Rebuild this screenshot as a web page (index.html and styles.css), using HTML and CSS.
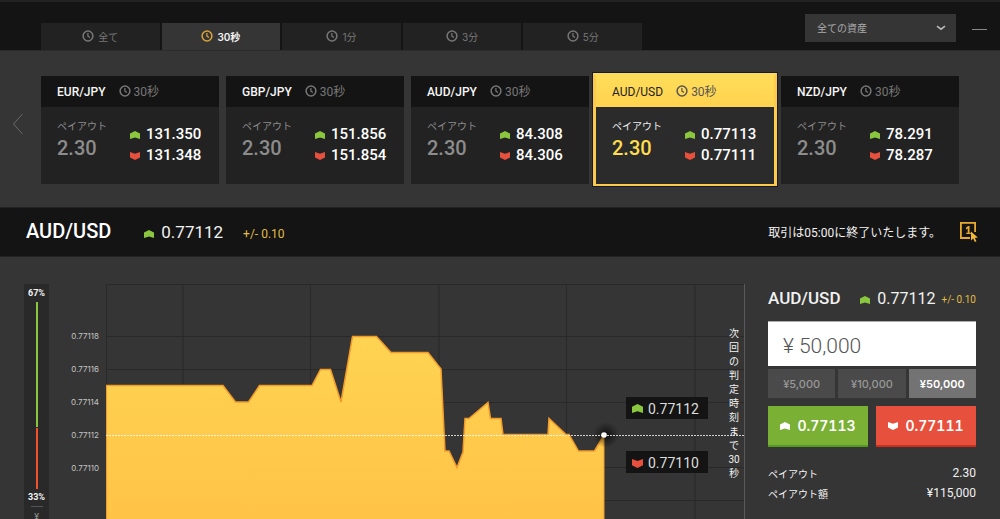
FILE: index.html
```html
<!DOCTYPE html>
<html lang="ja">
<head>
<meta charset="utf-8">
<meta name="viewport" content="width=device-width, initial-scale=1">
<title>AUD/USD</title>
<link rel="stylesheet" href="styles.css">
</head>
<body>
<svg class="defs" aria-hidden="true">
  <symbol id="clock" viewBox="0 0 12 12"><circle cx="6" cy="6" r="4.9" fill="none" stroke="currentColor" stroke-width="1.5"/><path d="M5.900 3v3.100l2 1.500" fill="none" stroke="currentColor" stroke-width="1.200"/></symbol>
  <symbol id="up" viewBox="0 0 10 8"><path d="M0 2.400 5 0l5 2.400V8L5 6.500 0 8z" fill="currentColor"/></symbol>
  <symbol id="down" viewBox="0 0 10 8"><path d="M0 0l5 1.800 5-1.800v5.600L5 8 0 5.600z" fill="currentColor"/></symbol>
</svg>

<header class="topbar">
  <nav class="tabs">
    <button class="tab"><svg class="clock"><use href="#clock"/></svg><span>全て</span></button>
    <button class="tab tab-active"><svg class="clock"><use href="#clock"/></svg><span>30秒</span></button>
    <button class="tab"><svg class="clock"><use href="#clock"/></svg><span>1分</span></button>
    <button class="tab"><svg class="clock"><use href="#clock"/></svg><span>3分</span></button>
    <button class="tab"><svg class="clock"><use href="#clock"/></svg><span>5分</span></button>
  </nav>
  <div class="tools">
    <div class="filter">
      <select class="filter-select" aria-label="資産"><option>全ての資産</option></select>
      <svg class="filter-arrow" viewBox="0 0 10 6"><path d="M1 1.200 5 4.200l4-3" fill="none" stroke="#bbb" stroke-width="1.500"/></svg>
    </div>
    <button class="minimize" aria-label="最小化"></button>
  </div>
</header>

<section class="assets">
  <button class="prev" aria-label="前へ"><svg viewBox="0 0 12 22"><path d="M10.500 1 1.500 11l9 10" fill="none" stroke="#6a6a6a" stroke-width="1"/></svg></button>
  <div class="cards">
    <article class="card">
      <div class="card-head"><h2 class="pair">EUR/JPY</h2><svg class="clock"><use href="#clock"/></svg><span class="term">30秒</span></div>
      <div class="card-body">
        <div class="payout"><span class="payout-label">ペイアウト</span><span class="payout-value">2.30</span></div>
        <div class="quotes"><span class="quote"><svg class="mark green"><use href="#up"/></svg>131.350</span><span class="quote"><svg class="mark red"><use href="#down"/></svg>131.348</span></div>
      </div>
    </article>
    <article class="card">
      <div class="card-head"><h2 class="pair">GBP/JPY</h2><svg class="clock"><use href="#clock"/></svg><span class="term">30秒</span></div>
      <div class="card-body">
        <div class="payout"><span class="payout-label">ペイアウト</span><span class="payout-value">2.30</span></div>
        <div class="quotes"><span class="quote"><svg class="mark green"><use href="#up"/></svg>151.856</span><span class="quote"><svg class="mark red"><use href="#down"/></svg>151.854</span></div>
      </div>
    </article>
    <article class="card">
      <div class="card-head"><h2 class="pair">AUD/JPY</h2><svg class="clock"><use href="#clock"/></svg><span class="term">30秒</span></div>
      <div class="card-body">
        <div class="payout"><span class="payout-label">ペイアウト</span><span class="payout-value">2.30</span></div>
        <div class="quotes"><span class="quote"><svg class="mark green"><use href="#up"/></svg>84.308</span><span class="quote"><svg class="mark red"><use href="#down"/></svg>84.306</span></div>
      </div>
    </article>
    <article class="card card-selected">
      <div class="card-head"><h2 class="pair">AUD/USD</h2><svg class="clock"><use href="#clock"/></svg><span class="term">30秒</span></div>
      <div class="card-body">
        <div class="payout"><span class="payout-label">ペイアウト</span><span class="payout-value">2.30</span></div>
        <div class="quotes"><span class="quote"><svg class="mark green"><use href="#up"/></svg>0.77113</span><span class="quote"><svg class="mark red"><use href="#down"/></svg>0.77111</span></div>
      </div>
    </article>
    <article class="card">
      <div class="card-head"><h2 class="pair">NZD/JPY</h2><svg class="clock"><use href="#clock"/></svg><span class="term">30秒</span></div>
      <div class="card-body">
        <div class="payout"><span class="payout-label">ペイアウト</span><span class="payout-value">2.30</span></div>
        <div class="quotes"><span class="quote"><svg class="mark green"><use href="#up"/></svg>78.291</span><span class="quote"><svg class="mark red"><use href="#down"/></svg>78.287</span></div>
      </div>
    </article>
  </div>
</section>

<section class="titlebar">
  <h1 class="title">AUD/USD</h1>
  <svg class="mark green"><use href="#up"/></svg>
  <span class="title-price">0.77112</span>
  <span class="title-spread">+/- 0.10</span>
  <span class="notice">取引は05:00に終了いたします。</span>
  <button class="oneclick" aria-label="ワンクリック"><svg viewBox="0 0 20 22"><path d="M11 17H1.900V1.900H16.100V11" fill="none" stroke="#e8a92f" stroke-width="1.800"/><path d="M7 6.700 9 5h1.500v8H8.700V7.400L7 8.400zM7.200 11.800h4.600V13H7.200z" fill="#e8a92f"/><path d="M12 10.500v9l2.200-1.900 1.700 3.500 1.600-.8-1.700-3.400 3-.300z" fill="#f2b738"/></svg></button>
</section>

<main class="main">
  <aside class="sentiment">
    <span>67%</span>
    <i class="bar bar-up"></i>
    <i class="bar bar-down"></i>
    <span>33%</span>
    <i class="rule"></i>
    <button class="collapse">¥</button>
  </aside>

  <div class="chart">
    <svg class="plot" viewBox="60 284 685 235" preserveAspectRatio="xMinYMin slice" role="img" aria-label="AUD/USD">
      <defs>
        <linearGradient id="area" x1="0" y1="0" x2="0" y2="1"><stop offset="0" stop-color="#ffd452"/><stop offset="1" stop-color="#ffc347"/></linearGradient>
        <radialGradient id="glow"><stop offset="0" stop-color="#000" stop-opacity=".7"/><stop offset="1" stop-color="#000" stop-opacity="0"/></radialGradient>
      </defs>
      <path class="grid" d="M106 284.500H744M106 336.500H744M106 369.500H744M106 402.500H744M106 435.500H744M106 467.500H744M106 500.500H744M106.500 284V519M183 284V519M310.500 284V519M439 284V519M566.500 284V519M695 284V519"/>
      <path class="edge" d="M744.500 284V519"/>
      <path fill="url(#area)" d="M106 519V385.500H223L235.500 402H248.500L259.500 385.500H312L320.500 369.500H330.500L341 402L352.500 336.500H376.500L391 352.500H428L441 369L445 451H449L457 467.500L463 452L465 418.500H469L488 402.500L490.500 418.500H501L503 434.500H548L549 418.500L566 434.500H569L578.500 451H594.500L604 435V519z"/>
      <path class="line" d="M106 385.500H223L235.500 402H248.500L259.500 385.500H312L320.500 369.500H330.500L341 402L352.500 336.500H376.500L391 352.500H428L441 369L445 451H449L457 467.500L463 452L465 418.500H469L488 402.500L490.500 418.500H501L503 434.500H548L549 418.500L566 434.500H569L578.500 451H594.500L604 435"/>
      <path class="line side" d="M106.500 386V519M604 436V519"/>
      <circle cx="606" cy="435" r="13" fill="url(#glow)"/>
      <path class="current" d="M106 435.500H744"/>
      <circle cx="604" cy="435" r="2.800" fill="#fff"/>
      <g class="axis">
        <text x="99" y="339">0.77118</text>
        <text x="99" y="372">0.77116</text>
        <text x="99" y="405">0.77114</text>
        <text x="99" y="438">0.77112</text>
        <text x="99" y="471">0.77110</text>
      </g>
      <g class="tag">
        <rect x="626" y="397" width="82" height="22"/>
        <use class="green" href="#up" x="632" y="404" width="11" height="9"/>
        <text x="648" y="414">0.77112</text>
        <rect x="626" y="451" width="82" height="22"/>
        <use class="red" href="#down" x="632" y="459" width="11" height="9"/>
        <text x="648" y="468">0.77110</text>
      </g>
    </svg>
    <p class="countdown">次回の判定時刻まで30秒</p>
  </div>

  <form class="order">
    <div class="order-head">
      <h2 class="order-pair">AUD/USD</h2>
      <svg class="mark green"><use href="#up"/></svg>
      <span class="order-price">0.77112</span>
      <span class="order-spread">+/- 0.10</span>
    </div>
    <input class="amount" type="text" value="¥ 50,000" aria-label="金額">
    <div class="presets">
      <button type="button" class="preset">¥5,000</button>
      <button type="button" class="preset">¥10,000</button>
      <button type="button" class="preset preset-active">¥50,000</button>
    </div>
    <div class="actions">
      <button type="button" class="action action-up"><svg class="mark"><use href="#up"/></svg>0.77113</button>
      <button type="button" class="action action-down"><svg class="mark"><use href="#down"/></svg>0.77111</button>
    </div>
    <dl class="summary">
      <div class="row"><dt>ペイアウト</dt><dd>2.30</dd></div>
      <div class="row"><dt>ペイアウト額</dt><dd>¥115,000</dd></div>
    </dl>
  </form>
</main>
</body>
</html>
```
FILE: styles.css
```css
* { box-sizing: border-box; }
body {
  margin: 0;
  height: 100vh;
  display: flex;
  flex-direction: column;
  overflow: hidden;
  background: #353535;
  color: #f2f2f2;
  font-family: Roboto, "Noto Sans CJK JP", sans-serif;
  font-size: 12px;
}
h1, h2, p, dl, dd { margin: 0; }
button, select, input { font-family: inherit; border: 0; border-radius: 0; padding: 0; margin: 0; }
button { background: none; color: inherit; }
svg { display: block; flex: none; }
.defs { position: absolute; width: 0; height: 0; }
.clock { width: 12px; height: 12px; }
.mark { width: 10px; height: 8px; }
.green { color: #8bc63f; }
.red { color: #e8503e; }

.topbar {
  display: flex;
  justify-content: space-between;
  align-items: flex-end;
  height: 51px;
  padding: 0 13px 0 41px;
  background: #141414;
  border-top: 2px solid #222;
  border-bottom: 1px solid #2c2c2c;
}
.tabs { display: grid; grid-template-columns: repeat(5, 1fr); gap: 2px; width: 601px; }
.tab {
  display: flex;
  align-items: center;
  justify-content: center;
  gap: 4px;
  height: 27px;
  background: #222;
  color: #777;
  font-family: Inter, "Noto Sans CJK JP", sans-serif;
  font-size: 10px;
  line-height: 14px;
}
.tab .clock { margin-bottom: 2px; }
.tab-active { background: #353535; color: #f4f4f4; font-weight: 600; margin-bottom: -1px; }
.tab-active .clock { color: #d9a53a; }
.tools { display: flex; align-items: center; gap: 16px; align-self: flex-start; padding-top: 12px; }
.filter { position: relative; }
.filter-select {
  appearance: none;
  display: block;
  width: 151px;
  height: 28px;
  padding: 0 12px;
  background: #353535;
  color: #aaa;
  font-size: 10px;
}
.filter-arrow { position: absolute; right: 10px; top: 11px; width: 10px; height: 6px; }
.minimize { width: 15px; height: 1px; margin-top: 2px; background: #888; }

.assets { display: flex; padding: 25px 41px 23px 0; }
.prev { flex: none; width: 41px; padding: 10px 0 23px 12px; }
.prev svg { width: 12px; height: 22px; }
.cards { flex: 1; display: grid; grid-template-columns: repeat(5, 1fr); gap: 7px; }
.card { background: #222; }
.card-head {
  display: flex;
  align-items: center;
  height: 31px;
  padding: 0 16px;
  background: #141414;
  color: #777;
}
.pair { margin-right: 13px; color: #f6f6f6; font-size: 12px; font-weight: 500; }
.card-head .clock { margin-bottom: 2px; }
.term { margin: 0 0 2px 3px; }
.card-body { display: flex; height: 77px; padding: 12px 0 0 16px; }
.payout { display: flex; flex-direction: column; width: 73px; color: #8c8c8c; }
.payout-label { font-size: 10px; line-height: 16px; }
.payout-value { font-size: 20px; line-height: 26px; font-weight: 500; }
.quotes { display: flex; flex-direction: column; padding-top: 5px; }
.quote { display: flex; align-items: center; gap: 6px; font-size: 15px; line-height: 21px; font-weight: 500; color: #fff; }
.quote .mark { margin-top: 1px; }
.card-selected {
  margin: -3px -3px -2px;
  background: #2b2b2b;
  border: 3px solid #ffc94a;
  border-top-color: #ffdc58;
  border-bottom-width: 2px;
  box-shadow: 0 0 0 1px #141a2c;
}
.card-selected .card-head { background: linear-gradient(#ffdd59, #ffd24f); color: #555; }
.card-selected .pair { color: #222; font-weight: 400; }
.card-selected .payout-label { color: #eee; }
.card-selected .payout-value { color: #ffdb4f; }

.titlebar {
  display: flex;
  align-items: center;
  height: 50px;
  padding: 0 21px 2px 26px;
  background: #141414;
  border-top: 1px solid #222;
  border-bottom: 1px solid #222;
}
.title { margin-right: 33px; font-size: 20px; font-weight: 500; color: #fff; }
.titlebar .mark { margin: 6px 7px 0 0; }
.title-price { margin-top: 2px; font-size: 17px; }
.title-spread { margin: 6px 0 0 20px; font-size: 12px; color: #e0bc45; }
.notice { margin-left: auto; font-size: 12px; }
.oneclick { margin: 2px 0 0 18px; }
.oneclick svg { width: 20px; height: 22px; }

.main { flex: 1; display: flex; min-height: 0; padding: 27px 24px 0; }
.sentiment {
  display: flex;
  flex-direction: column;
  align-items: center;
  width: 25px;
  overflow: hidden;
  background: #292929;
  font-size: 9px;
  line-height: 18px;
  font-weight: 700;
}
.bar { flex: none; width: 2px; }
.bar-up { height: 125px; margin-top: 1px; background: #8bc63f; }
.bar-down { height: 61px; margin-top: 1px; background: #f0522f; }
.rule { flex: none; width: 12px; height: 1px; margin: 1px 0 4px; background: #555; }
.sentiment span { flex: none; height: 17px; }
.sentiment .bar-down + span { height: 16px; line-height: 16px; }
.collapse { flex: none; color: #999; font-size: 9px; line-height: 12px; }

.chart { position: relative; flex: 1; min-width: 0; margin: 0 24px 0 11px; }
.plot { width: 100%; height: 100%; overflow: visible; }
.grid { stroke: #292929; fill: none; }
.edge { stroke: #5a5a5a; }
.line { fill: none; stroke: #f39a2b; stroke-width: 1.5; }
.side { stroke-width: 1; }
.current { stroke: #fff; stroke-dasharray: 2 1; stroke-opacity: .8; }
.axis { fill: #c4c4c4; font-family: Inter, sans-serif; font-size: 8px; text-anchor: end; }
.tag rect { fill: #141414; }
.tag text { fill: #ddd; font-size: 14px; }
.countdown {
  position: absolute;
  top: 43px;
  right: 3px;
  width: 14px;
  font-size: 10px;
  line-height: 14px;
  text-align: center;
}

.order { width: 208px; flex: none; }
.order-head { display: flex; align-items: center; height: 27px; margin-bottom: 10px; white-space: nowrap; }
.order-pair { font-size: 17px; font-weight: 500; }
.order-head .mark { margin: 4px 7px 0 auto; }
.order-price { margin-top: 1px; font-size: 16px; }
.order-spread { margin: 4px 0 0 6px; font-size: 10px; color: #e0bc45; }
.amount {
  display: block;
  width: 100%;
  height: 45px;
  padding: 4px 15px 0;
  background: #fff;
  color: #555;
  font-size: 21px;
  font-weight: 300;
  border-top: 1px solid #aaa;
}
.presets { display: grid; grid-template-columns: repeat(3, 1fr); gap: 3px; margin-top: 3px; }
.preset {
  height: 29px;
  background: #4a4a4a;
  color: #999;
  font-family: Inter, sans-serif;
  font-size: 11px;
  font-weight: 500;
}
.preset-active { background: #737373; color: #fff; font-weight: 600; }
.actions { display: grid; grid-template-columns: 1fr 1fr; gap: 8px; margin-top: 8px; }
.action {
  display: flex;
  align-items: center;
  justify-content: center;
  gap: 7px;
  height: 41px;
  color: #fff;
  font-family: Inter, sans-serif;
  font-size: 14px;
  font-weight: 600;
  font-variant-numeric: tabular-nums;
}
.action-up { background: #7ab034; border-bottom: 2px solid #539a20; }
.action-down { background: #e6503c; border-bottom: 2px solid #cf2e1c; }
.summary { margin-top: 16px; }
.row { display: flex; justify-content: space-between; align-items: center; height: 20px; }
.row dt { font-size: 10px; }
.row dd { font-size: 12px; }
```
